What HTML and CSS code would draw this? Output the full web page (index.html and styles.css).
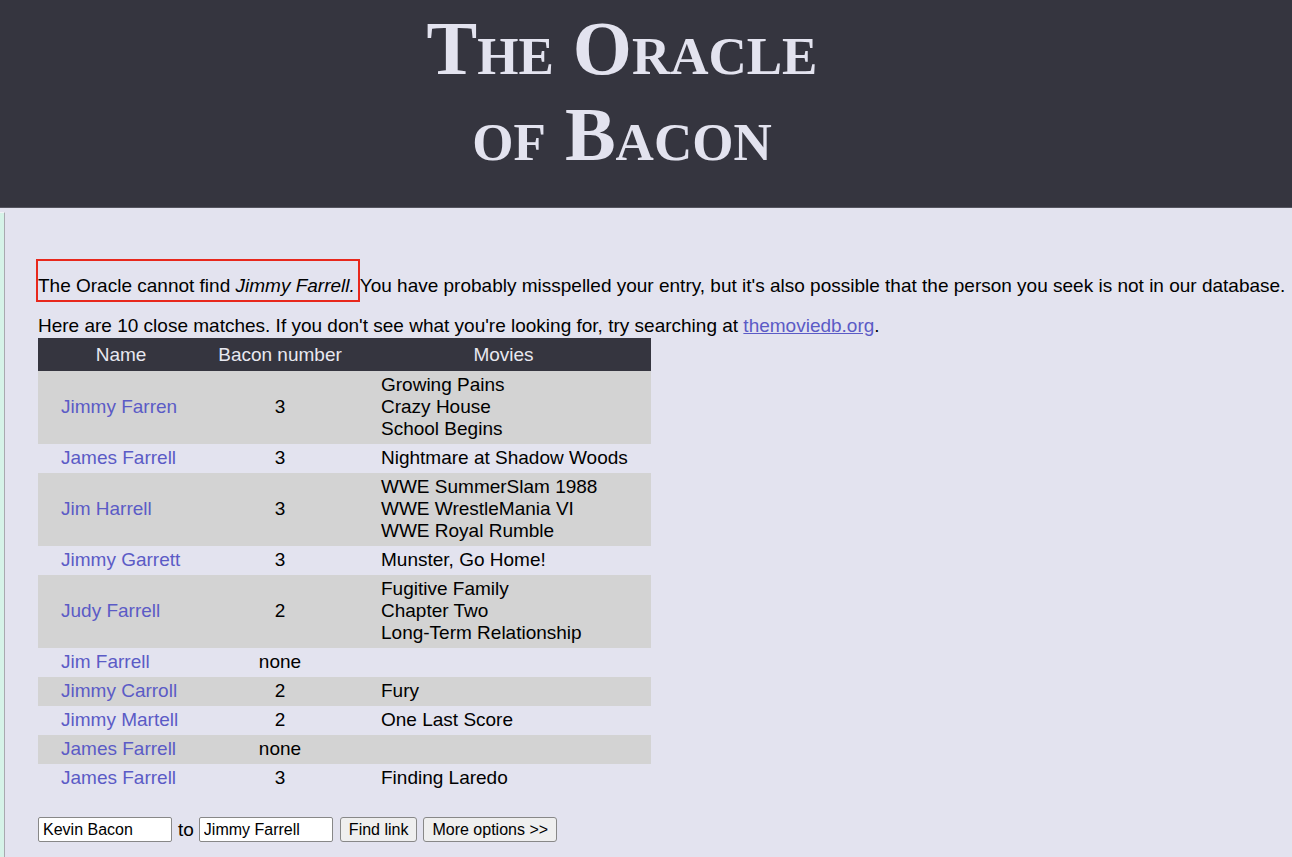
FILE: index.html
```html
<!DOCTYPE html>
<html>
<head>
<meta charset="utf-8">
<title>The Oracle of Bacon</title>
<link rel="stylesheet" href="styles.css">
</head>
<body>
<header class="masthead">
  <h1 class="title">The Oracle<br>of Bacon</h1>
</header>
<div class="page">
  <div class="sidestrip"></div>
  <main class="content">
    <p class="notfound"><span class="marked">The Oracle cannot find <i>Jimmy Farrell.</i></span> You have probably misspelled your entry, but it's also possible that the person you seek is not in our database.</p>
    <p class="matches">Here are 10 close matches. If you don't see what you're looking for, try searching at <a href="#">themoviedb.org</a>.</p>
    <table class="results">
      <thead>
        <tr><th class="c-name">Name</th><th class="c-num">Bacon number</th><th class="c-mov">Movies</th></tr>
      </thead>
      <tbody>
        <tr class="odd"><td class="name"><a href="#">Jimmy Farren</a></td><td class="num">3</td><td class="mov">Growing Pains<br>Crazy House<br>School Begins</td></tr>
        <tr><td class="name"><a href="#">James Farrell</a></td><td class="num">3</td><td class="mov">Nightmare at Shadow Woods</td></tr>
        <tr class="odd"><td class="name"><a href="#">Jim Harrell</a></td><td class="num">3</td><td class="mov">WWE SummerSlam 1988<br>WWE WrestleMania VI<br>WWE Royal Rumble</td></tr>
        <tr><td class="name"><a href="#">Jimmy Garrett</a></td><td class="num">3</td><td class="mov">Munster, Go Home!</td></tr>
        <tr class="odd"><td class="name"><a href="#">Judy Farrell</a></td><td class="num">2</td><td class="mov">Fugitive Family<br>Chapter Two<br>Long-Term Relationship</td></tr>
        <tr><td class="name"><a href="#">Jim Farrell</a></td><td class="num">none</td><td class="mov"></td></tr>
        <tr class="odd"><td class="name"><a href="#">Jimmy Carroll</a></td><td class="num">2</td><td class="mov">Fury</td></tr>
        <tr><td class="name"><a href="#">Jimmy Martell</a></td><td class="num">2</td><td class="mov">One Last Score</td></tr>
        <tr class="odd"><td class="name"><a href="#">James Farrell</a></td><td class="num">none</td><td class="mov"></td></tr>
        <tr><td class="name"><a href="#">James Farrell</a></td><td class="num">3</td><td class="mov">Finding Laredo</td></tr>
      </tbody>
    </table>
    <form class="search">
      <input class="field" type="text" value="Kevin Bacon">
      <span class="to">to</span>
      <input class="field" type="text" value="Jimmy Farrell">
      <button class="btn" type="button">Find link</button>
      <button class="btn" type="button">More options &gt;&gt;</button>
    </form>
  </main>
</div>
</body>
</html>
```

FILE: styles.css
```css
html, body {
  margin: 0;
  padding: 0;
}
body {
  background: #e3e3ef;
  font-family: "Liberation Sans", Arial, sans-serif;
  font-size: 19px;
  line-height: 22px;
  color: #000;
}
.masthead {
  background: #35353f;
  height: 208px;
  box-sizing: border-box;
  padding-top: 5px;
  padding-right: 48px;
  border-bottom: 1px solid #55555f;
}
.title {
  margin: 0;
  text-align: center;
  font-family: "Liberation Serif", "Times New Roman", serif;
  font-weight: bold;
  font-variant: small-caps;
  font-size: 76px;
  line-height: 86px;
  color: #e3e3ef;
}
.page {
  display: flex;
  align-items: flex-start;
  min-height: 648px;
}
.sidestrip {
  width: 4px;
  height: 644px;
  margin-top: 4px;
  background: #d6f3e8;
  border-top: 1px solid #f2f2f6;
  border-right: 1px solid #a9a9b0;
  flex: none;
}
.content {
  padding-left: 33px;
  padding-top: 67px;
}
p {
  margin: 0;
}
.notfound {
  margin-bottom: 18px;
  white-space: nowrap;
}
.marked {
  position: relative;
}
.marked::after {
  content: "";
  position: absolute;
  left: -2px;
  right: -5px;
  top: -16px;
  bottom: -6px;
  border: 2px solid #e8281c;
}
a {
  color: #5b5bc6;
  text-decoration: none;
}
.matches a {
  text-decoration: underline;
}
.results {
  border-collapse: collapse;
  border-spacing: 0;
  width: 613px;
  margin-top: 1px;
}
.results th {
  background: #35353f;
  color: #e8e8f0;
  font-weight: normal;
  text-align: center;
  padding: 6px 0 5px;
}
.c-name { width: 166px; }
.c-num { width: 152px; }
.results td {
  padding: 3px 0 4px;
  vertical-align: middle;
}
.results tr.odd td {
  background: #d3d3d3;
}
.name {
  padding-left: 23px !important;
}
.num {
  text-align: center;
}
.mov {
  padding-left: 25px !important;
}
.search {
  margin-top: 24px;
  display: flex;
  align-items: center;
  font-size: 16px;
}
.field {
  width: 134px;
  height: 25px;
  box-sizing: border-box;
  font-family: "Liberation Sans", Arial, sans-serif;
  font-size: 16px;
  padding: 1px 4px;
  border: 1px solid #888;
  border-radius: 2px;
  background: #fff;
  margin: 0;
}
.to {
  font-size: 19px;
  margin: 0 5px 0 6px;
}
.btn {
  height: 25px;
  margin-left: 7px;
  padding: 0 8px;
  font-family: "Liberation Sans", Arial, sans-serif;
  font-size: 16px;
  background: #efefef;
  border: 1px solid #888;
  border-radius: 3px;
  color: #000;
}
.btn + .btn {
  margin-left: 6px;
}
```
